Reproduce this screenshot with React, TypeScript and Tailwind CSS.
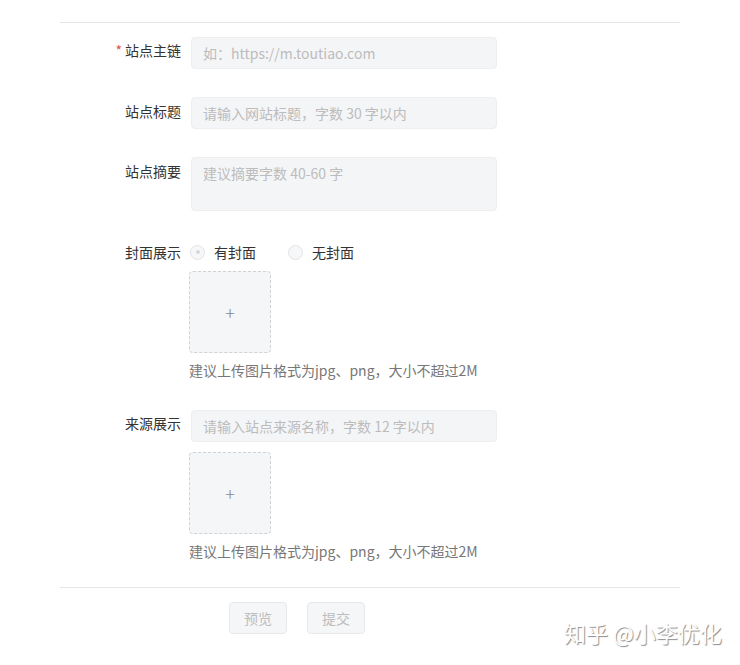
import React from 'react';

const FONT = { fontFamily: '"Noto Sans CJK SC", "Liberation Sans", sans-serif' };

function FieldLabel({ children, required }: { children: React.ReactNode; required?: boolean }) {
  return (
    <div className="w-[131px] shrink-0 pr-[10px] text-right text-[14px] leading-[20px] text-[#333]">
      {required && <span className="mr-[3px] text-[#d9534f]">*</span>}
      {children}
    </div>
  );
}

function Upload() {
  return (
    <div className="-ml-[2px] flex h-[82px] w-[82px] items-center justify-center rounded-[4px] border border-dashed border-[#cfd2d6] bg-[#f5f6f8] text-[18px] font-light text-[#888]">
      +
    </div>
  );
}

function Hint() {
  return (
    <p className="-ml-[2px] mt-[7px] text-[14px] leading-[20px] text-[#777]">
      建议上传图片格式为jpg、png，大小不超过2M
    </p>
  );
}

export default function App() {
  return (
    <div className="relative h-[665px] w-[740px] overflow-hidden bg-white" style={FONT}>
      <div className="ml-[60px] w-[620px] pt-[22px]">
        <div className="border-t border-[#e6e6e6]" />

        {/* Form rows */}
        <div className="mt-[14px] flex">
          <div className="pt-[3px]">
            <FieldLabel required>站点主链</FieldLabel>
          </div>
          <div className="flex h-[32px] w-[306px] items-center rounded-[4px] border border-[#eceef0] bg-[#f4f5f7] px-[11px] text-[14px] text-[#bcbcbc]">
            如：https://m.toutiao.com
          </div>
        </div>

        <div className="mt-[28px] flex">
          <div className="pt-[4px]">
            <FieldLabel>站点标题</FieldLabel>
          </div>
          <div className="flex h-[32px] w-[306px] items-center rounded-[4px] border border-[#eceef0] bg-[#f4f5f7] px-[11px] text-[14px] text-[#bcbcbc]">
            请输入网站标题，字数 30 字以内
          </div>
        </div>

        <div className="mt-[28px] flex">
          <div className="pt-[4px]">
            <FieldLabel>站点摘要</FieldLabel>
          </div>
          <div className="h-[54px] w-[306px] rounded-[4px] border border-[#eceef0] bg-[#f4f5f7] px-[11px] pt-[5px] text-[14px] leading-[20px] text-[#bcbcbc]">
            建议摘要字数 40-60 字
          </div>
        </div>

        <div className="mt-[31px] flex">
          <FieldLabel>封面展示</FieldLabel>
          <div>
            <div className="flex h-[20px] items-center text-[14px] text-[#333]">
              <span className="ml-[-1px] flex h-[15px] w-[15px] items-center justify-center rounded-full border border-[#e2e4e6] bg-[#f6f7f8]">
                <span className="h-[4px] w-[4px] rounded-full bg-[#d6d8da]" />
              </span>
              <span className="ml-[9px]">有封面</span>
              <span className="ml-[32px] h-[15px] w-[15px] rounded-full border border-[#e2e4e6] bg-[#f6f7f8]" />
              <span className="ml-[9px]">无封面</span>
            </div>
            <div className="mt-[9px]">
              <Upload />
            </div>
            <Hint />
          </div>
        </div>

        <div className="mt-[30px] flex">
          <div className="pt-[3px]">
            <FieldLabel>来源展示</FieldLabel>
          </div>
          <div>
            <div className="flex h-[32px] w-[306px] items-center rounded-[4px] border border-[#eceef0] bg-[#f4f5f7] px-[11px] text-[14px] text-[#bcbcbc]">
              请输入站点来源名称，字数 12 字以内
            </div>
            <div className="mt-[10px]">
              <Upload />
            </div>
            <Hint />
          </div>
        </div>

        <div className="mt-[26px] border-t border-[#e6e6e6]" />

        {/* Actions */}
        <div className="mt-[14px] flex gap-[20px] pl-[169px]">
          <button className="h-[32px] w-[58px] rounded-[4px] border border-[#e6e8ea] bg-[#f5f6f8] text-[14px] text-[#bdbdbd]">
            预览
          </button>
          <button className="h-[32px] w-[58px] rounded-[4px] border border-[#e6e8ea] bg-[#f5f6f8] text-[14px] text-[#bdbdbd]">
            提交
          </button>
        </div>
      </div>

      {/* Watermark */}
      <div
        className="absolute left-[564px] top-[617px] text-[22px] leading-[30px] text-white"
        style={{ textShadow: '1px 1px 1px rgba(110,110,110,0.8)' }}
      >
        知乎 @小李优化
      </div>
    </div>
  );
}
